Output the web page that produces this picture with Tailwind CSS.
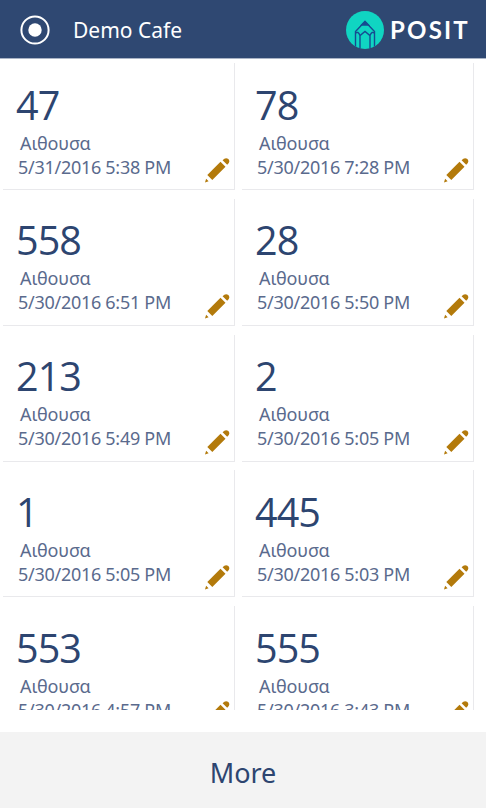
<!DOCTYPE html>
<html lang="el">
<head>
<meta charset="utf-8">
<title>Demo Cafe</title>
<script src="https://cdn.jsdelivr.net/npm/@tailwindcss/browser@4"></script>
</head>
<body class="w-[486px] h-[810px] overflow-hidden bg-white font-['Noto_Sans',sans-serif] text-[#2d4570] flex flex-col">
<header class="h-[58px] shrink-0 bg-[#2f4872] flex items-center pl-5 pr-[18px] text-white shadow-[0_1px_0_#aab4c6]">
  <svg class="size-[30px] shrink-0 mt-px" viewBox="0 0 30 30"><circle cx="15" cy="15" r="13.6" fill="none" stroke="#fff" stroke-width="2"/><circle cx="15" cy="15" r="6.7" fill="#fff"/></svg>
  <h1 class="ml-[23px] mt-[2px] text-[21px] leading-[30px] whitespace-nowrap">Demo Cafe</h1>
  <svg class="ml-auto size-[38px] shrink-0 mt-px" viewBox="0 0 38 38">
    <defs><clipPath id="disc"><circle cx="19" cy="19" r="19"/></clipPath></defs>
    <circle cx="19" cy="19" r="19" fill="#10d5c2"/>
    <g clip-path="url(#disc)" fill="none" stroke="#164b91" stroke-width="1.4"><path d="M9.500 38V20.500L19 10.500 28.500 20.500V38M14 38V24.500M24 38V24.500M9.500 22.500Q12 19.500 14 24.500L19 20.500 24 24.500Q26 19.500 28.500 22.500"/><path d="M15.500 14 19 10.500l3.500 3.500Z" fill="#164b91"/></g>
  </svg>
  <span class="ml-[6px] w-[78px] mt-[2px] text-[24px] leading-[30px] font-bold font-[Lato,sans-serif] tracking-[2.2px] whitespace-nowrap">POSIT</span>
</header>
<main id="orders" class="h-[652px] shrink-0 overflow-hidden pt-[5px] pl-[3px] grid grid-cols-[232px_232px] auto-rows-[127px] gap-x-[7px] gap-y-[8.75px] content-start"></main>
<footer class="mt-[22px] h-[76px] shrink-0 bg-[#f3f3f3] flex items-center justify-center">
  <button class="text-[27px] leading-[36px] mt-[6px] tracking-[-0.1px]">More</button>
</footer>
<template id="card">
  <article class="relative border-r border-b border-[#e9e9ec] pt-[21.5px] pl-[15px] whitespace-nowrap">
    <p class="num font-['Open_Sans',sans-serif] text-[39.5px] leading-[40px] tracking-[-0.9px] -ml-[2px]"></p>
    <p class="mt-[6px] ml-[2px] text-[18px] leading-6 tracking-[-0.1px] text-[#5a6a8d]">Αιθουσα</p>
    <p class="date text-[18px] leading-6 tracking-[-0.28px] text-[#5a6a8d]"></p>
    <svg class="absolute right-[4px] bottom-[6px] w-[26px] h-[26px]" viewBox="0 0 26 26" fill="#b37a0b"><path d="M3.300 18 16.500 4.800l5 5L8.300 23ZM2.100 21.800l2.500 2.500L1 25.500ZM18.600 3.200Q21.500-.2 24.400 2 26.800 4.800 23.200 7.800Z"/></svg>
  </article>
</template>
<script>
const orders = [
  ['47', '5/31/2016 5:38 PM'], ['78', '5/30/2016 7:28 PM'],
  ['558', '5/30/2016 6:51 PM'], ['28', '5/30/2016 5:50 PM'],
  ['213', '5/30/2016 5:49 PM'], ['2', '5/30/2016 5:05 PM'],
  ['1', '5/30/2016 5:05 PM'], ['445', '5/30/2016 5:03 PM'],
  ['553', '5/30/2016 4:57 PM'], ['555', '5/30/2016 3:43 PM']
];
const list = document.getElementById('orders');
for (const [num, date] of orders) {
  const card = document.getElementById('card').content.cloneNode(true);
  card.querySelector('.num').textContent = num;
  card.querySelector('.date').textContent = date;
  list.append(card);
}
</script>
</body>
</html>
